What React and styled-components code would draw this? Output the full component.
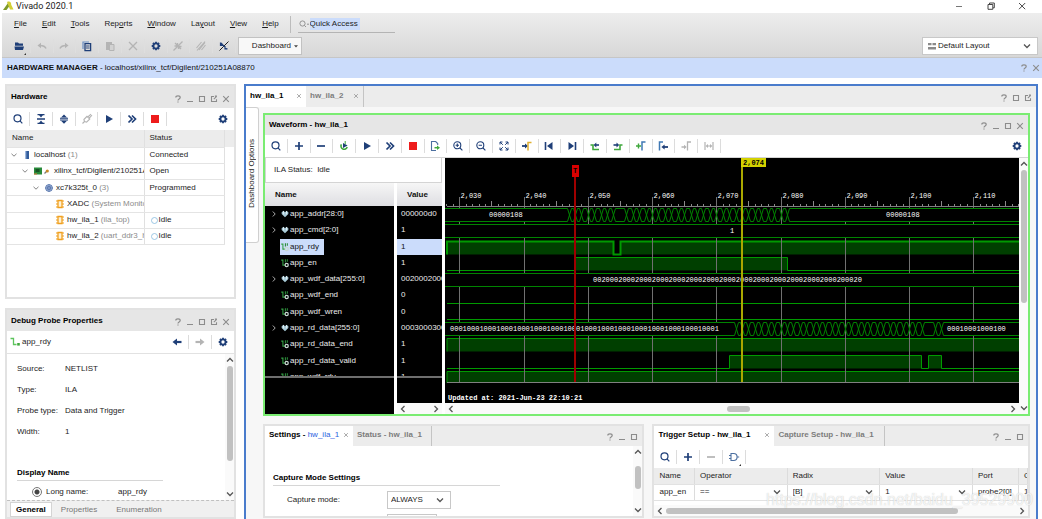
import React from "react";
import styled, { createGlobalStyle, css } from "styled-components";

const color = {
    navy: "#1f3f78",
    green: "#3fa83c",
    gray: "#8c8c8c",
    off: "#b4b4b4",
    header: "#e6e6e6",
    line: "#e2e2e2",
    select: "#cbdcfb",
};

const GlobalStyle = createGlobalStyle`
    * {
        box-sizing: border-box;
    }
    body {
        margin: 0;
        background: #fff;
        color: #1c1c1c;
        font: 8px/12px "Liberation Sans", Arial, sans-serif;
    }
    button, input, select {
        margin: 0;
        padding: 0;
        border: 0;
        background: none;
        color: inherit;
        font: inherit;
        outline: none;
    }
    svg {
        display: block;
        flex: none;
    }
`;

/* ---------- icons ---------- */

const stroke = (c, w = 1.3) => ({ fill: "none", stroke: c, strokeWidth: w });
const gearTeeth = [0, 45, 90, 135, 180, 225, 270, 315];

const icons = {
    search: <g {...stroke(color.navy, 1.2)}><circle cx="5.5" cy="5.3" r="3.5" /><path d="M8 7.8 L10.3 10.3" /></g>,
    collapse: <g><path d="M2 6h8M2.5 1.6h7M2.5 10.4h7" {...stroke(color.navy)} /><path d="M4 2h4L6 4.6zM4 10h4L6 7.4z" fill={color.navy} /></g>,
    expand: <g><path d="M2 5.2h8M2 7h8" {...stroke(color.navy, 1.1)} /><path d="M3 4.4h6L6 1.4zM3 7.8h6L6 10.8z" fill={color.navy} /></g>,
    plug: <g {...stroke(color.off, 1.1)}><path d="M1.5 10.5l2-2M3.5 8.5l-.6-2L6 3.3 8.8 6 5.6 9.1zM6.8 4l3.2-2.8M8 5.3L11 2.2" /></g>,
    play: <path d="M3 2l7 4-7 4z" fill={color.navy} />,
    fast: <path d="M2.5 2.5L6 6 2.5 9.5M6 2.5L9.5 6 6 9.5" {...stroke(color.navy, 1.7)} />,
    stop: <path d="M2 2h8v8H2z" fill="#ee1c1c" />,
    gear: (
        <g>
            <circle cx="6" cy="6" r="2.6" {...stroke(color.navy, 1.9)} />
            {gearTeeth.map(a => <path key={a} d="M5.1 3V1.7h1.8V3z" fill={color.navy} transform={`rotate(${a} 6 6)`} />)}
        </g>
    ),
    folder: <path d="M2 2.5h3l1 1h4v2.3H2zM1.5 6.6h9.5L10 10H2z" fill={color.navy} />,
    undo: <g><path d="M1.5 5.5L5 2.7v5.6z" fill={color.off} /><path d="M4 5.5c3 0 5 .5 6 3" {...stroke(color.off, 1.5)} /></g>,
    redo: <g><path d="M10.5 5.5L7 2.7v5.6z" fill={color.off} /><path d="M8 5.5c-3 0-5 .5-6 3" {...stroke(color.off, 1.5)} /></g>,
    copy: <g><path d="M2 9V2h6" {...stroke("#6b8fc4", 1.2)} /><path d="M4 3.6h5.6v7H4z" {...stroke(color.navy, 1.3)} /><path d="M5 6h3.6M5 8h3.6" {...stroke(color.navy, .9)} /></g>,
    paste: <g><path d="M2 2h6v8H2z" fill={color.off} /><path d="M5.5 4.5h4.5v6H5.5z" fill="#d2d2d2" stroke={color.off} /></g>,
    cut: <path d="M2 2l8 8M10 2l-8 8" {...stroke(color.off, 1.3)} />,
    probeOff: <path d="M1.5 10.5l9-9M3 3l6 6M2.5 6h3V3M6.5 9V6.5h3" {...stroke(color.off, 1.3)} />,
    eraseOff: <path d="M1.5 8l5-6M4 10l6-7.5M2 10.5l8-9M6.5 10L10.5 5" {...stroke(color.off, 1.1)} />,
    probe: <g><path d="M1.5 10.5l9-9" {...stroke("#222", 1)} /><path d="M2.5 2.5v3h3M6.5 8.8h3M7 6v3.5M3 3l6 6.4" {...stroke(color.navy, 1.2)} /></g>,
    plus: <path d="M6 2v8M2 6h8" {...stroke(color.navy, 1.7)} />,
    minus: <path d="M2 6h8" {...stroke(color.navy, 1.7)} />,
    minusOff: <path d="M2 6h8" {...stroke(color.off, 1.7)} />,
    rerun: <g><path d="M3.4 4.4A3.2 3.2 0 1 0 9.2 7" {...stroke(color.green, 1.6)} /><path d="M5 3l4.6 2.4L5 8z" fill={color.navy} /><path d="M7.2 1v3.4" {...stroke(color.green, 1)} /></g>,
    exportFile: <g><path d="M7 10.5H2.5v-9h4.2l2 2V5" {...stroke("#4c6fa0", 1.1)} /><path d="M5.5 7.7h3" {...stroke(color.green, 1.5)} /><path d="M8 5.5l3 2.2-3 2.3z" fill={color.green} /></g>,
    zoomIn: <g {...stroke(color.navy, 1.1)}><circle cx="5.3" cy="5.3" r="3.5" /><path d="M8 8l2.4 2.4M3.6 5.3H7M5.3 3.6V7" /></g>,
    zoomOut: <g {...stroke(color.navy, 1.1)}><circle cx="5.3" cy="5.3" r="3.5" /><path d="M8 8l2.4 2.4M3.6 5.3H7" /></g>,
    fit: <path d="M4.8 4.8L2 2M2 4.5V2h2.5M7.2 4.8L10 2M7.5 2H10v2.5M4.8 7.2L2 10M2 7.5V10h2.5M7.2 7.2L10 10M7.5 10H10V7.5" {...stroke(color.navy, 1)} />,
    toCursor: <g><path d="M1 6h4" {...stroke(color.navy, 1.8)} /><path d="M4 3.6L7 6 4 8.4z" fill={color.navy} /><path d="M7 10.5V2.5h3.5" {...stroke("#e0b030", 1.5)} /></g>,
    first: <g><path d="M2.5 2v8" {...stroke(color.navy, 1.6)} /><path d="M9.5 2v8L4 6z" fill={color.navy} /></g>,
    last: <g><path d="M9.5 2v8" {...stroke(color.navy, 1.6)} /><path d="M2.5 2v8L8 6z" fill={color.navy} /></g>,
    prevEdge: <g><path d="M1.5 5H4v4.5h6" {...stroke(color.green, 1.6)} /><path d="M6.5 5H10" {...stroke(color.navy, 1.6)} /><path d="M7.3 2.4v5L4.6 5z" fill={color.navy} /></g>,
    nextEdge: <g><path d="M10.5 5H8v4.5H2" {...stroke(color.green, 1.6)} /><path d="M1.5 5H5" {...stroke(color.navy, 1.6)} /><path d="M4.5 2.4v5L7.2 5z" fill={color.navy} /></g>,
    addMarker: <g><path d="M1 6h5M3.5 3.5v5" {...stroke(color.green, 1.4)} /><path d="M7 10.5V2h3.5" {...stroke("#3f78b4", 1.5)} /></g>,
    prevMarker: <g><path d="M2.5 10.5V2H6" {...stroke("#3f78b4", 1.5)} /><path d="M7 7h4" {...stroke(color.navy, 1.8)} /><path d="M7.6 4.4v5L4.4 7z" fill={color.navy} /></g>,
    nextMarker: <g><path d="M1.5 7h3" {...stroke(color.off, 1.5)} /><path d="M4 4.7L6.7 7 4 9.3z" fill={color.off} /><path d="M7.5 10.5V2H11" {...stroke(color.off, 1.3)} /></g>,
    swap: <g><path d="M2 2v8M10 2v8M4 6h4" {...stroke(color.off, 1.2)} /><path d="M5 4L2.6 6 5 8zM7 4l2.4 2L7 8z" fill={color.off} /></g>,
    gate: <g {...stroke("#4c6fa0", 1.1)}><path d="M3 2.5h2.6a3.5 3.5 0 0 1 0 7H3zM1 4.5h2M1 7.5h2M9.2 6h2" /></g>,
    back: <g><path d="M5 6h5.5" {...stroke(color.navy, 2.2)} /><path d="M6 2.6v6.8L1.5 6z" fill={color.navy} /></g>,
    forward: <g><path d="M1.5 6H7" {...stroke(color.off, 2.2)} /><path d="M6 2.6v6.8L10.5 6z" fill={color.off} /></g>,
    help: <g><path d="M3.8 4.6c0-2.4 4.4-2.4 4.4 0C8.2 6 6 6 6 7.4" {...stroke(color.gray, 1.2)} /><path d="M5.4 8.4h1.2v1.2H5.4z" fill={color.gray} /></g>,
    hide: <path d="M3 8.5h6" {...stroke(color.gray, 1)} />,
    maximize: <path d="M3.5 3.5h5v5h-5z" {...stroke(color.gray, 1.1)} />,
    float: <g {...stroke(color.gray, 1.1)}><path d="M6 3.5H3.5v5h5V6.2M5.8 6.2l2.9-2.9M6.9 3.1h2" /></g>,
    close: <path d="M3.2 3.2l5.6 5.6M8.8 3.2L3.2 8.8" {...stroke(color.gray, 1.1)} />,
    chevronDown: <path d="M3 4.5l3 3 3-3" {...stroke("#555", 1.3)} />,
    chevronUp: <path d="M3 7.5l3-3 3 3" {...stroke("#555", 1.3)} />,
    chevronLeft: <path d="M7.5 3l-3 3 3 3" {...stroke("#555", 1.3)} />,
    chevronRight: <path d="M4.5 3l3 3-3 3" {...stroke("#555", 1.3)} />,
    treeOpen: <path d="M3.5 4.8L6 7.2l2.5-2.4" {...stroke("#777", .9)} />,
    treeClosed: <path d="M4.8 3.5L7.2 6 4.8 8.5" {...stroke("#aaa", 1)} />,
    server: <g><path d="M4 2h4v8H4z" fill="#335d9c" /><path d="M4 2h1.3v8H4z" fill="#9db7dd" /></g>,
    board: <g><path d="M2 2.5h8v7H2z" fill="#288a3a" /><path d="M3.5 4h4v3h-4z" fill="#195425" /><path d="M2 9h3" {...stroke("#e07b3c", 1)} /></g>,
    link: <g><path d="M3.5 8.5l2-2" {...stroke("#777", 1.2)} /><circle cx="6.3" cy="6" r="1.6" fill="#c78a2a" /></g>,
    chip: <g><circle cx="6" cy="6" r="3.4" fill="#c3d2ec" stroke="#4768a4" strokeWidth=".9" /><path d="M4.5 4.5h3v3h-3zM6 2.5v7M2.5 6h7" {...stroke("#4768a4", .7)} /></g>,
    core: <g><path d="M4 2.5h4v7H4z" fill="#fff2d6" stroke="#f0a020" strokeWidth="1.3" /><path d="M2 3h2M2 6h2M2 9h2M8 3h2M8 6h2M8 9h2" {...stroke("#f0a020", 1)} /></g>,
    bus: <g><path d="M2 4l2.2-2L6 4l1.8-2L10 4v2L6 10 2 6z" fill="#a9cbd8" /><path d="M4.2 2.5v4M7.8 2.5v4" {...stroke("#e8f4f8", 1)} /></g>,
    signal: <g><path d="M1.5 2.5h2v6h2.5" {...stroke("#35a045", 1.3)} /><path d="M6.5 1.5v4M8.8 1.5v3" {...stroke("#2b8a3a", 1.3)} /><circle cx="8" cy="8.3" r="1.9" {...stroke("#c9d8d2", 1.5)} /></g>,
    probeGreen: <g><path d="M1.5 2.5h3v6h3" {...stroke("#5cc45c", 1.3)} /><path d="M8.2 7h2.6v2.6H8.2z" fill={color.green} /></g>,
    idle: <circle cx="6" cy="6" r="4" {...stroke("#7fb6dc", 1)} />,
    layout: <path d="M2 3h3.5v2.2H2zM6.5 3H10v2.2H6.5zM2 7h8v2.4H2z" fill="#8a8a8a" />,
    searchGray: <g {...stroke("#8a8a8a", .9)}><circle cx="4.5" cy="5.5" r="2.6" /><path d="M6.4 7.4L8 9M9 6.2h2" /></g>,
    logo: <g><path d="M1 10L6 3l1.5 3L4.5 10z" fill="#7f9a28" /><path d="M5 2c3-1.5 4.4.6 4.2 2.8L11.5 9.5H8z" fill="#d2cf35" /></g>,
    winMin: <path d="M3 6.5h6" {...stroke("#777", 1)} />,
    winMax: <path d="M3 4.5h4.8v4.8H3zM4.5 4.3V3h4.8v4.8H8" {...stroke("#444", 1)} />,
    winClose: <path d="M3 3l6.2 6.2M9.2 3L3 9.2" {...stroke("#333", .9)} />,
    menuArrow: <path d="M3.6 5h4.8L6 7.8z" fill="#444" />,
};

const Icon = ({ name, size = 12 }) => (
    <svg width={size} height={size} viewBox="0 0 12 12" aria-hidden="true">{icons[name]}</svg>
);

/* ---------- shared parts ---------- */

const Panel = styled.section`
    display: flex;
    flex-direction: column;
    min-width: 0;
    min-height: 0;
    overflow: hidden;
    background: #fff;
    border: 2px solid ${p => p.$accent || color.line};
`;

const PanelHeader = styled.header`
    display: flex;
    flex: none;
    justify-content: space-between;
    height: ${p => p.$height || 20}px;
    padding-left: ${p => (p.$tabs ? 0 : 4)}px;
    background: ${p => (p.$tabs ? "#ececec" : color.header)};
`;

const Title = styled.h2`
    margin: 0;
    align-self: center;
    font-size: 8px;
    color: #000;
`;

const Controls = styled.div`
    display: flex;
    align-items: flex-end;
    padding: 0 2px 3px 0;
`;

const IconButton = styled.button`
    display: flex;
    align-items: center;
    justify-content: center;
    width: ${p => p.$width || 12}px;
`;

const Toolbar = styled.div`
    display: flex;
    flex: none;
    align-items: center;
    justify-content: space-between;
    height: ${p => p.$height || 22}px;
    background: #fff;
`;

const ToolGroup = styled.div`
    display: flex;
    flex: 0 1 ${p => p.$width}px;
`;

const ToolButton = styled.button`
    position: relative;
    display: flex;
    flex: 1;
    align-items: center;
    justify-content: center;
    height: 14px;
    border-right: 1px solid ${p => (p.$faint ? "#dedede" : "#dcdcdc")};
    ${p => p.$menu && css`
        &::after {
            content: "";
            position: absolute;
            right: 4px;
            bottom: -2px;
            border: 1px solid #333;
            border-left-color: transparent;
            border-top-color: transparent;
        }
    `}
`;

const TabStrip = styled.div`
    display: flex;
`;

const Tab = styled.button`
    display: flex;
    align-items: center;
    justify-content: space-between;
    width: ${p => p.$width}px;
    padding: 0 3px 2px 4px;
    background: ${p => (p.$active ? "#fff" : "transparent")};
    border-right: ${p => (p.$active ? "0" : "1px solid #c4c4c4")};
    color: ${p => (p.$active ? "#000" : "#7c7c7c")};
    font-weight: bold;
    white-space: nowrap;
    em {
        color: #2b62e0;
        font-style: normal;
        font-weight: normal;
    }
`;

const VScroll = styled.div`
    display: flex;
    flex: none;
    flex-direction: column;
    align-items: center;
    width: 9px;
    overflow: hidden;
    background: #fafafa;
`;

const HScroll = styled.div`
    display: flex;
    flex: none;
    align-items: center;
    height: ${p => p.$height || 11}px;
    background: #fafafa;
`;

const Track = styled.div`
    display: flex;
    flex: 1;
    align-self: stretch;
    flex-direction: ${p => (p.$horizontal ? "row" : "column")};
    align-items: center;
`;

const Spacer = styled.div`
    flex: ${p => p.$grow};
`;

const Thumb = styled.div`
    flex: ${p => p.$grow};
    align-self: center;
    ${p => (p.$horizontal ? "height: 6px;" : "width: 6px;")}
    border-radius: 3px;
    background: #c1c1c1;
`;

const Scroller = ({ horizontal, height, parts = [0, 1, 0], empty }) => {
    const Bar = horizontal ? HScroll : VScroll;
    return (
        <Bar $height={height}>
            <Icon name={horizontal ? "chevronLeft" : "chevronUp"} />
            <Track $horizontal={horizontal}>
                <Spacer $grow={parts[0]} />
                {!empty && <Thumb $grow={parts[1]} $horizontal={horizontal} />}
                <Spacer $grow={parts[2]} />
            </Track>
            <Icon name={horizontal ? "chevronRight" : "chevronDown"} />
        </Bar>
    );
};

const WindowControls = ({ names }) => (
    <Controls>
        {names.map(name => (
            <IconButton key={name} aria-label={name}><Icon name={name} /></IconButton>
        ))}
    </Controls>
);

const Tools = ({ names, width, menus = [], faint }) => (
    <ToolGroup $width={width}>
        {names.map(name => (
            <ToolButton key={name} aria-label={name} $menu={menus.includes(name)} $faint={faint}>
                <Icon name={name} />
            </ToolButton>
        ))}
    </ToolGroup>
);

/* ---------- top of the window ---------- */

const Shell = styled.div`
    display: flex;
    flex-direction: column;
    height: 100vh;
    overflow: hidden;
`;

const TitleBar = styled.div`
    display: flex;
    flex: none;
    align-items: center;
    height: 13px;
    padding: 0 5px 2px 2px;
    font-family: Roboto, sans-serif;
    font-size: 9px;
    h1 {
        flex: 1;
        margin: 0 0 0 2px;
        font-size: inherit;
        font-weight: normal;
    }
`;

const Chrome = styled.div`
    flex: none;
    height: 45px;
    margin-left: 2px;
    background: linear-gradient(#ededed, #d7d7d7);
    border-bottom: 1px solid #c6c6c6;
`;

const MenuBar = styled.nav`
    display: flex;
    align-items: center;
    gap: 15px;
    height: 22px;
    padding-left: 12px;
`;

const QuickAccess = styled.label`
    display: flex;
    align-items: center;
    width: 105px;
    height: 17px;
    margin-left: -4px;
    padding-left: 7px;
    border-left: 1px solid #bcbcbc;
    input {
        width: 50px;
        height: 12px;
        background: ${color.select};
    }
    div {
        display: flex;
        flex: 1;
        align-items: center;
        height: 17px;
        border-bottom: 1px solid #b4b4b4;
    }
`;

const MainTools = styled.div`
    display: flex;
    align-items: center;
    height: 22px;
    padding: 0 4px 0 6px;
`;

const DashboardButton = styled.button`
    display: flex;
    align-items: center;
    justify-content: flex-end;
    width: 64px;
    height: 18px;
    margin: 0 auto 0 2px;
    background: #f8f8f8;
    border: 1px solid #c2c2c2;
`;

const SelectBox = styled.label`
    display: flex;
    align-items: center;
    width: ${p => (p.$plain ? "100%" : `${p.$width}px`)};
    height: ${p => p.$height || 18}px;
    padding: 0 4px 0 ${p => (p.$plain ? 0 : 3)}px;
    background: #fff;
    border: ${p => (p.$plain ? "0" : "1px solid #c8c8c8")};
    select {
        flex: 1;
        min-width: 0;
        appearance: none;
    }
`;

const ManagerBar = styled.div`
    display: flex;
    flex: none;
    align-items: center;
    justify-content: space-between;
    height: 20px;
    margin-left: 2px;
    padding-left: 5px;
    background: ${color.select};
    color: #111;
`;

const menus = ["File", "Edit", "Tools", "Reports", "Window", "Layout", "View", "Help"];
const hotkeys = { Reports: 3, Layout: 2 };

const Underlined = ({ text, at = 0 }) => (
    <span>{text.slice(0, at)}<u>{text[at]}</u>{text.slice(at + 1)}</span>
);

const Select = ({ label, options, icon, ...rest }) => (
    <SelectBox {...rest}>
        {icon && <Icon name={icon} />}
        <select aria-label={label}>{options.map(o => <option key={o}>{o}</option>)}</select>
        <Icon name="chevronDown" />
    </SelectBox>
);

const Top = () => (
    <>
        <TitleBar>
            <Icon name="logo" />
            <h1>Vivado 2020.1</h1>
            <IconButton $width={32} aria-label="Minimize"><Icon name="winMin" /></IconButton>
            <IconButton $width={32} aria-label="Restore"><Icon name="winMax" /></IconButton>
            <IconButton $width={30} aria-label="Close"><Icon name="winClose" /></IconButton>
        </TitleBar>
        <Chrome>
            <MenuBar>
                {menus.map(m => <button key={m}><Underlined text={m} at={hotkeys[m]} /></button>)}
                <QuickAccess>
                    <div>
                        <Icon name="searchGray" />
                        <input aria-label="Quick Access" defaultValue="Quick Access" />
                    </div>
                </QuickAccess>
            </MenuBar>
            <MainTools>
                <Tools
                    faint
                    width={228}
                    menus={["folder"]}
                    names={["folder", "undo", "redo", "copy", "paste", "cut", "gear", "probeOff", "eraseOff", "probe"]}
                />
                <DashboardButton>Dashboard<Icon name="menuArrow" size={10} /></DashboardButton>
                <Select label="Layout" icon="layout" options={["Default Layout"]} $width={116} />
            </MainTools>
        </Chrome>
        <ManagerBar>
            <span><b>HARDWARE MANAGER</b> - localhost/xilinx_tcf/Digilent/210251A08870</span>
            <TabStrip>
                <IconButton aria-label="help"><Icon name="help" /></IconButton>
                <IconButton aria-label="close"><Icon name="close" /></IconButton>
            </TabStrip>
        </ManagerBar>
    </>
);

/* ---------- left column ---------- */

const Workspace = styled.main`
    display: grid;
    flex: 1;
    grid-template-columns: 231px minmax(0, 1fr);
    gap: 8px;
    min-height: 0;
    padding: 6px 4px 0 5px;
`;

const LeftColumn = styled.div`
    display: grid;
    grid-template-rows: 215px minmax(0, 1fr);
    gap: 9px;
    min-height: 0;
`;

const HardwareTable = styled.table`
    width: 218px;
    height: 115px;
    border-collapse: collapse;
    table-layout: fixed;
    th, td {
        overflow: hidden;
        padding: 0 0 0 5px;
        border-bottom: 1px solid #e4e4e4;
        border-right: 1px solid #e0e0e0;
        font-weight: normal;
        text-align: left;
        white-space: nowrap;
    }
    td:first-child {
        padding-left: 1px;
    }
    th {
        height: 17px;
        background: #ececec;
    }
`;

const TableArea = styled.div`
    background: linear-gradient(#ececec 17px, #fff 17px);
`;

const TreeCell = styled.div`
    display: flex;
    align-items: center;
    gap: 1px;
    padding-left: ${p => p.$level * 11 + (p.$leaf ? 13 : 0)}px;
    span {
        color: #8c8c8c;
    }
    svg + svg + svg {
        margin-left: -4px;
    }
`;

const StatusCell = styled.div`
    display: flex;
    align-items: center;
`;

const hardware = [
    { level: 0, icon: "server", name: "localhost", note: "(1)", status: "Connected", open: true },
    { level: 1, icon: "board", extra: "link", name: "xilinx_tcf/Digilent/210251A08870", status: "Open", open: true },
    { level: 2, icon: "chip", name: "xc7k325t_0", note: "(3)", status: "Programmed", open: true },
    { level: 3, icon: "core", name: "XADC", note: "(System Monitor)" },
    { level: 3, icon: "core", name: "hw_ila_1", note: "(ila_top)", status: "Idle", idle: true },
    { level: 3, icon: "core", name: "hw_ila_2", note: "(uart_ddr3_hdmi)", status: "Idle", idle: true },
];

const Hardware = () => (
    <Panel>
        <PanelHeader $height={22}>
            <Title>Hardware</Title>
            <WindowControls names={["help", "hide", "maximize", "float", "close"]} />
        </PanelHeader>
        <Toolbar>
            <Tools width={160} names={["search", "collapse", "expand", "plug", "play", "fast", "stop"]} />
            <IconButton $width={22} aria-label="Settings"><Icon name="gear" /></IconButton>
        </Toolbar>
        <TableArea>
            <HardwareTable>
                <colgroup><col width="137" /><col /></colgroup>
                <thead><tr><th>Name</th><th>Status</th></tr></thead>
                <tbody>
                    {hardware.map(h => (
                        <tr key={h.name}>
                            <td>
                                <TreeCell $level={h.level} $leaf={!h.open}>
                                    {h.open && <Icon name="treeOpen" />}
                                    <Icon name={h.icon} />
                                    {h.extra && <Icon name={h.extra} />}
                                    <div>{h.name} <span>{h.note}</span></div>
                                </TreeCell>
                            </td>
                            <td><StatusCell>{h.idle && <Icon name="idle" size={9} />}{h.status}</StatusCell></td>
                        </tr>
                    ))}
                </tbody>
            </HardwareTable>
        </TableArea>
    </Panel>
);

const ProbeBar = styled(Toolbar)`
    padding-left: 2px;
    border-bottom: 1px solid ${color.line};
    span {
        display: flex;
        flex: 1;
        align-items: center;
        gap: 1px;
    }
`;

const Split = styled.div`
    display: flex;
    flex: 1;
    min-height: 0;
`;

const Form = styled.div`
    flex: 1;
    min-width: 0;
    overflow: hidden;
    padding: ${p => p.$top}px 0 0 ${p => p.$left}px;
`;

const Properties = styled.dl`
    display: grid;
    grid-template-columns: 48px 1fr;
    grid-auto-rows: 12px;
    gap: 9px 0;
    margin: 0 0 29px;
    dd {
        margin: 0;
    }
`;

const SectionTitle = styled.h3`
    width: ${p => p.$width}px;
    margin: 0;
    padding-bottom: 1px;
    border-bottom: 1px solid #d6d6d6;
    color: #000;
    font-size: 8px;
`;

const RadioRow = styled.label`
    display: flex;
    align-items: center;
    height: 22px;
    padding-left: 15px;
    input {
        width: 10px;
        height: 10px;
        margin-right: 4px;
        appearance: none;
        border: 1px solid #777;
        border-radius: 50%;
        background: radial-gradient(#444 2px, #fff 3px);
    }
    span {
        width: 72px;
    }
`;

const BottomTabs = styled.div`
    display: flex;
    flex: none;
    height: 17px;
    padding: 1px 0 0 3px;
    background: #f0f0f0;
    border-top: 1px dashed #c0c0c0;
    button {
        margin-right: 7px;
        padding: 0 5px;
        border: 1px solid transparent;
        color: #777;
    }
    button:first-child {
        margin-right: 3px;
        background: #fff;
        border-color: #d4d4d4;
        color: #000;
        font-weight: bold;
    }
`;

const ProbeProperties = () => (
    <Panel>
        <PanelHeader $height={21}>
            <Title>Debug Probe Properties</Title>
            <WindowControls names={["help", "hide", "maximize", "float", "close"]} />
        </PanelHeader>
        <ProbeBar $height={23}>
            <span><Icon name="probeGreen" />app_rdy</span>
            <Tools width={46} names={["back", "forward"]} />
            <IconButton $width={22} aria-label="Settings"><Icon name="gear" /></IconButton>
        </ProbeBar>
        <Split>
            <Form $top={9} $left={10}>
                <Properties>
                    <dt>Source:</dt><dd>NETLIST</dd>
                    <dt>Type:</dt><dd>ILA</dd>
                    <dt>Probe type:</dt><dd>Data and Trigger</dd>
                    <dt>Width:</dt><dd>1</dd>
                </Properties>
                <SectionTitle $width={146}>Display Name</SectionTitle>
                <RadioRow>
                    <input type="radio" name="display" defaultChecked />
                    <span>Long name:</span>app_rdy
                </RadioRow>
            </Form>
            <Scroller parts={[0, 98, 28]} />
        </Split>
        <BottomTabs><button>General</button><button>Properties</button><button>Enumeration</button></BottomTabs>
    </Panel>
);

/* ---------- waveform ---------- */

const signals = [
    { name: "app_addr[28:0]", value: "000000d0", bus: true },
    { name: "app_cmd[2:0]", value: "1", bus: true },
    { name: "app_rdy", value: "1", selected: true },
    { name: "app_en", value: "1" },
    { name: "app_wdf_data[255:0]", value: "00200020002000200020", bus: true },
    { name: "app_wdf_end", value: "0" },
    { name: "app_wdf_wren", value: "0" },
    { name: "app_rd_data[255:0]", value: "00030003000300030003", bus: true },
    { name: "app_rd_data_end", value: "1" },
    { name: "app_rd_data_valid", value: "1" },
    { name: "app_wdf_rdy", value: "1" },
];

const WaveBody = styled.div`
    display: grid;
    flex: 1;
    grid-template-columns: 177px minmax(0, 1fr) 9px;
    min-height: 0;
    border-top: 1px solid #d4d4d4;
`;

const NamesArea = styled.div`
    display: grid;
    grid-template-columns: 129px minmax(0, 1fr);
    grid-template-rows: 25px minmax(0, 1fr);
    gap: 0 3px;
    min-height: 0;
`;

const IlaStatus = styled.div`
    grid-column: 1 / 3;
    padding: 6px 8px;
    border: 1px solid #d4d4d4;
    border-top: 0;
`;

const Pane = styled.div`
    display: flex;
    flex-direction: column;
    min-width: 0;
    min-height: 0;
    background: #000;
`;

const RowsClip = styled.div`
    height: 195px;
    flex: none;
    overflow: hidden;
    border-bottom: 2px solid #6e6e6e;
`;

const PaneFill = styled.div`
    flex: 1;
`;

const SignalTable = styled.table`
    width: 100%;
    height: 202px;
    border-collapse: collapse;
    table-layout: fixed;
    color: #ececec;
    th {
        height: 23px;
        padding: 0 10px;
        background: linear-gradient(#f6f6f6, #dedee2);
        color: #111;
        text-align: left;
    }
    td {
        overflow: hidden;
        padding: 0 0 0 4px;
        white-space: nowrap;
    }
    td[data-selected="true"] {
        background: ${color.select};
        color: #111;
    }
`;

const SignalName = styled.div`
    display: flex;
    align-items: center;
    height: 16px;
    margin-left: -1px;
    span {
        display: flex;
        align-items: center;
        height: 16px;
        margin-left: ${p => (p.$bus ? 0 : 12)}px;
        padding-right: 5px;
        ${p => p.$selected && css`
            background: ${color.select};
            color: #111;
        `}
    }
`;

const WaveColumn = styled.div`
    display: flex;
    flex-direction: column;
    min-width: 0;
    min-height: 0;
    padding-left: 3px;
`;

const Canvas = styled.svg`
    flex: 1;
    width: 100%;
    min-height: 0;
    background: #000;
    text {
        fill: #fff;
        font: 7px "Liberation Mono", monospace;
    }
    text.dark {
        fill: #000;
    }
    text.strong {
        font-weight: bold;
    }
`;

const END = 2400;
const xAt = t => Math.round(14.3 + (t - 2030) * 6.424) + 0.5;
const rowTop = i => Math.round(50 + i * 16.3) + 0.5;
const range = (a, b) => Array.from({ length: b - a + 1 }, (_, i) => a + i);

const Bus = ({ row, edges = [] }) => {
    const top = rowTop(row);
    const bottom = top + 13;
    const mid = top + 6.5;
    const stops = [-10, ...edges.map(xAt), END];
    return (
        <g fill="none" stroke="#008400">
            {stops.slice(1).map((b, i) => {
                const a = stops[i];
                return (
                    <path
                        key={a}
                        fill={b - a > 20 ? "#000" : "none"}
                        d={`M${a} ${mid}L${a + 2} ${top}H${b - 2}L${b} ${mid}L${b - 2} ${bottom}H${a + 2}Z`}
                    />
                );
            })}
        </g>
    );
};

// pulses: list of [from, to] where the signal is high
const Logic = ({ row, pulses = [], bold }) => {
    const top = rowTop(row);
    const low = top + 13;
    let d = `M2 ${low}`;
    pulses.forEach(([a, b]) => { d += `H${a}V${top}H${b}V${low}`; });
    d += `H${END}`;
    return (
        <g>
            {pulses.map(([a, b]) => <rect key={a} x={a} y={top} width={b - a} height="13" fill="#003f00" />)}
            <path d={d} fill="none" stroke="#009a00" strokeWidth={bold ? 2 : 1} />
        </g>
    );
};

const Waves = () => (
    <Canvas role="img" aria-label="Waveform">
        <Logic row={2} bold pulses={[[2, 168.5], [175.5, END]]} />
        <Logic row={3} pulses={[[130.5, 342.5]]} />
        <Logic row={5} />
        <Logic row={6} />
        <Logic row={8} pulses={[[2, END]]} />
        <Logic row={9} pulses={[[284.5, 476.5], [483.5, 496.5]]} />
        <Logic row={10} pulses={[[2, END]]} />
        <rect x="0" y="225" width="100%" height="20" fill="#000" />
        {range(2028, 2360).map(t => (
            <path
                key={t}
                d={`M${xAt(t)} ${t % 10 === 0 ? 39 : t % 5 === 0 ? 43 : 46}V${t % 10 === 0 ? 224 : 48}`}
                stroke={t % 10 === 0 ? "#707070" : "#8a8a8a"}
            />
        ))}
        <path d={`M2 48.5H${END}M2 224.5H${END}`} stroke="#808080" />
        <Bus row={0} edges={[...range(2047, 2054), ...range(2056, 2081)]} />
        <Bus row={1} />
        <Bus row={4} />
        <Bus row={7} edges={[...range(2073, 2102), 2104, 2105]} />
        {range(203, 235).map(n => (
            <text key={n} x={xAt(n * 10) + 1} y="40">{`${Math.floor(n / 100)},${String(n % 100).padStart(2, "0")}0`}</text>
        ))}
        <text x="44" y="59">00000108</text>
        <text x="441" y="59">00000108</text>
        <text x="285" y="75">1</text>
        <text x="148" y="124">{"0020".repeat(16)}</text>
        <text x="5" y="173">{"0001".repeat(16)}</text>
        <text x="502" y="173">00010001000100</text>
        <path d="M297 0V224" stroke="#aaa800" strokeWidth="2" />
        <rect x="296" y="0" width="25" height="9" fill="#d4d200" />
        <text className="dark strong" x="298" y="7">2,074</text>
        <path d="M130 10V224" stroke="#a00000" strokeWidth="2" />
        <rect x="127" y="7" width="7" height="12" fill="#d80000" />
        <text className="dark strong" x="128" y="15">T</text>
        <text className="strong" x="3" y="242">Updated at: 2021-Jun-23 22:10:21</text>
    </Canvas>
);

const Waveform = () => (
    <Panel $accent="#7aec72">
        <PanelHeader>
            <Title>Waveform - hw_ila_1</Title>
            <WindowControls names={["help", "hide", "maximize", "close"]} />
        </PanelHeader>
        <Toolbar>
            <Tools
                width={456}
                names={["search", "plus", "minus", "rerun", "play", "fast", "stop", "exportFile", "zoomIn", "zoomOut", "fit",
                    "toCursor", "first", "last", "prevEdge", "nextEdge", "addMarker", "prevMarker", "nextMarker", "swap"]}
            />
            <IconButton $width={22} aria-label="Settings"><Icon name="gear" /></IconButton>
        </Toolbar>
        <WaveBody>
            <NamesArea>
                <IlaStatus>ILA Status:&nbsp; Idle</IlaStatus>
                <Pane>
                    <RowsClip>
                        <SignalTable>
                            <thead><tr><th>Name</th></tr></thead>
                            <tbody>
                                {signals.map(s => (
                                    <tr key={s.name}>
                                        <td>
                                            <SignalName $bus={s.bus} $selected={s.selected}>
                                                {s.bus && <Icon name="treeClosed" />}
                                                <span><Icon name={s.bus ? "bus" : "signal"} size={10} />{s.name}</span>
                                            </SignalName>
                                        </td>
                                    </tr>
                                ))}
                            </tbody>
                        </SignalTable>
                    </RowsClip>
                </Pane>
                <Pane>
                    <RowsClip>
                        <SignalTable>
                            <thead><tr><th>Value</th></tr></thead>
                            <tbody>
                                {signals.map(s => (
                                    <tr key={s.name}><td data-selected={!!s.selected}>{s.value}</td></tr>
                                ))}
                            </tbody>
                        </SignalTable>
                    </RowsClip>
                    <PaneFill />
                    <Scroller horizontal empty />
                </Pane>
            </NamesArea>
            <WaveColumn>
                <Waves />
                <Scroller horizontal parts={[270, 23, 257]} />
            </WaveColumn>
            <Scroller parts={[0, 127, 95]} />
        </WaveBody>
    </Panel>
);

/* ---------- bottom panels ---------- */

const SecondBox = styled.div`
    width: 50px;
    height: 18px;
    margin: 5px 0 0 114px;
    border: 1px solid #c8c8c8;
`;

const FieldRow = styled.div`
    display: flex;
    align-items: center;
    margin-top: 5px;
    padding-left: 14px;
    & > span {
        width: 100px;
    }
`;

const Settings = () => (
    <Panel>
        <PanelHeader $tabs>
            <TabStrip>
                <Tab $active $width={88}><span>Settings - <em>hw_ila_1</em></span><Icon name="close" size={8} /></Tab>
                <Tab $width={79}>Status - hw_ila_1</Tab>
            </TabStrip>
            <WindowControls names={["help", "hide", "maximize"]} />
        </PanelHeader>
        <Split>
            <Form $top={26} $left={8}>
                <SectionTitle $width={227}>Capture Mode Settings</SectionTitle>
                <FieldRow>
                    <span>Capture mode:</span>
                    <Select label="Capture mode" options={["ALWAYS"]} $width={64} />
                </FieldRow>
                <SecondBox />
            </Form>
            <Scroller parts={[8, 24, 16]} />
        </Split>
    </Panel>
);

const TriggerTable = styled.table`
    flex: none;
    width: 100%;
    border-collapse: collapse;
    table-layout: fixed;
    th, td {
        overflow: hidden;
        height: 16px;
        padding: 0 0 0 5px;
        border-right: 1px solid #dcdcdc;
        border-bottom: 1px solid #e2e2e2;
        font-weight: normal;
        text-align: left;
        white-space: nowrap;
    }
    th {
        background: #ececec;
    }
`;

const Trigger = () => (
    <Panel>
        <PanelHeader $tabs>
            <TabStrip>
                <Tab $active $width={120}>Trigger Setup - hw_ila_1<Icon name="close" size={8} /></Tab>
                <Tab $width={111}>Capture Setup - hw_ila_1</Tab>
            </TabStrip>
            <WindowControls names={["help", "hide", "maximize"]} />
        </PanelHeader>
        <Toolbar>
            <Tools width={92} menus={["gate"]} names={["search", "plus", "minusOff", "gate"]} />
        </Toolbar>
        <TriggerTable>
            <colgroup><col width="40" /><col /><col /><col /><col width="46" /><col width="9" /></colgroup>
            <thead>
                <tr><th>Name</th><th>Operator</th><th>Radix</th><th>Value</th><th>Port</th><th>Comparator</th></tr>
            </thead>
            <tbody>
                <tr>
                    <td>app_en</td>
                    <td><Select label="Operator" options={["=="]} $plain $height={14} /></td>
                    <td><Select label="Radix" options={["[B]"]} $plain $height={14} /></td>
                    <td><Select label="Value" options={["1"]} $plain $height={14} /></td>
                    <td>probe2[0]</td>
                    <td>1</td>
                </tr>
            </tbody>
        </TriggerTable>
        <Spacer $grow={1} />
        <Scroller horizontal parts={[0, 292, 58]} />
    </Panel>
);

/* ---------- dashboard ---------- */

const Dashboard = styled.section`
    display: flex;
    flex-direction: column;
    min-width: 0;
    min-height: 0;
    border: 2px solid #4a7ccc;
    border-bottom: 0;
    background: #f7f7f7;
`;

const DashboardBody = styled.div`
    display: flex;
    flex: 1;
    gap: 4px;
    min-height: 0;
    padding-right: 6px;
`;

const OptionsTab = styled.button`
    flex: none;
    align-self: flex-start;
    width: 13px;
    height: 136px;
    background: #fff;
    border: 1px solid #d0d0d0;
    border-left: 0;
    border-radius: 0 3px 3px 0;
    span {
        writing-mode: vertical-rl;
        transform: rotate(180deg);
    }
`;

const Panels = styled.div`
    display: grid;
    flex: 1;
    grid-template-columns: minmax(0, 382fr) minmax(0, 378fr);
    grid-template-rows: minmax(0, 303fr) minmax(0, 94fr);
    gap: 8px;
    min-width: 0;
    padding: 6px 0 1px;
    & > :first-child {
        grid-column: 1 / 3;
    }
`;

const Watermark = styled.div`
    position: absolute;
    right: 9px;
    bottom: 9px;
    color: rgba(255, 255, 255, .8);
    font-size: 16px;
    line-height: 20px;
    text-shadow: 0 0 1px rgba(120, 120, 120, .45);
    pointer-events: none;
`;

const App = () => (
    <Shell>
        <GlobalStyle />
        <Top />
        <Workspace>
            <LeftColumn>
                <Hardware />
                <ProbeProperties />
            </LeftColumn>
            <Dashboard>
                <PanelHeader $tabs $height={21}>
                    <TabStrip>
                        <Tab $active $width={60}>hw_ila_1<Icon name="close" size={8} /></Tab>
                        <Tab $width={58}>hw_ila_2<Icon name="close" size={8} /></Tab>
                    </TabStrip>
                    <WindowControls names={["help", "maximize", "float"]} />
                </PanelHeader>
                <DashboardBody>
                    <OptionsTab><span>Dashboard Options</span></OptionsTab>
                    <Panels>
                        <Waveform />
                        <Settings />
                        <Trigger />
                    </Panels>
                </DashboardBody>
            </Dashboard>
        </Workspace>
        <Watermark>https://blog.csdn.net/baidu_39529900</Watermark>
    </Shell>
);

export default App;
